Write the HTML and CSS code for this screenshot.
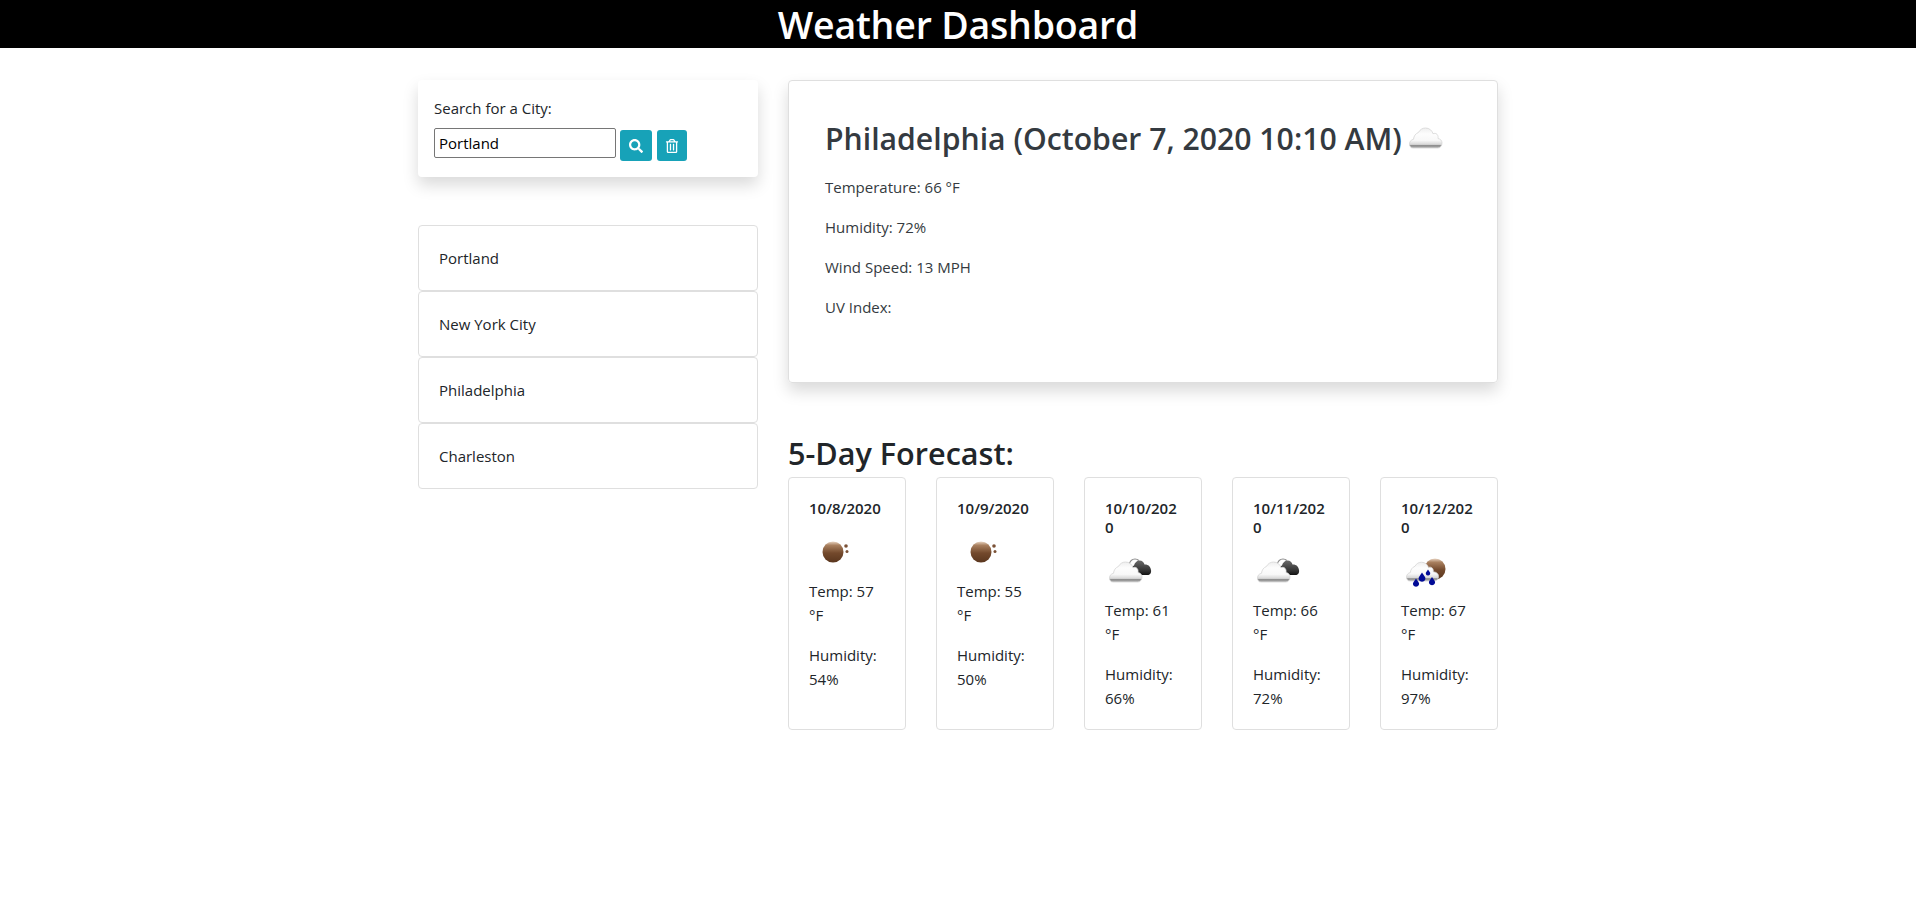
FILE: index.html

```html
<!DOCTYPE html>
<html lang="en">
<head>
  <meta charset="UTF-8">
  <title>Weather Dashboard</title>
  <link rel="stylesheet" href="styles.css">
</head>
<body>

  <svg class="defs" width="0" height="0">
    <defs>
      <linearGradient id="cloudFill" x1="0" y1="0" x2="0" y2="1">
        <stop offset="0" stop-color="#eeeeee"/>
        <stop offset="0.3" stop-color="#fdfdfd"/>
        <stop offset="0.62" stop-color="#f8f8f8"/>
        <stop offset="0.82" stop-color="#d8d8d8"/>
        <stop offset="0.88" stop-color="#8a8a8a"/>
        <stop offset="1" stop-color="#b5b5b5"/>
      </linearGradient>
      <linearGradient id="darkFill" x1="0" y1="0" x2="0" y2="1">
        <stop offset="0" stop-color="#6a6a6a"/>
        <stop offset="0.7" stop-color="#333333"/>
        <stop offset="1" stop-color="#111111"/>
      </linearGradient>
      <linearGradient id="moonFill" x1="0" y1="0" x2="0" y2="1">
        <stop offset="0" stop-color="#e9d5c3"/>
        <stop offset="0.18" stop-color="#a9805f"/>
        <stop offset="0.55" stop-color="#73492c"/>
        <stop offset="1" stop-color="#5a361e"/>
      </linearGradient>
      <symbol id="cloud" viewBox="0 0 50 50">
        <path fill="url(#cloudFill)" stroke="#d6d6d6" stroke-width="0.8" d="M8 38c-2.500 0-3.500-2-3.500-4 0-2.600 1.700-4.300 4-4.700.2-3.200 2.200-5.800 5-6.900 1.500-2.900 4.200-4.400 7-4.400 3.800 0 6.700 2.500 7.500 5.800 1.300-.8 3-.6 4 .5 1.200 1.300 1.200 2.900 1 4.200 2.500.5 4 2.200 4 4.300 0 2.800-1.600 5.200-4 5.200z"/>
      </symbol>
      <symbol id="moon" viewBox="0 0 50 50">
        <circle cx="24" cy="27" r="10.500" fill="url(#moonFill)"/>
        <circle cx="37" cy="21" r="1.800" fill="#7b5237"/>
        <circle cx="38" cy="26.500" r="1.500" fill="#7b5237"/>
      </symbol>
      <symbol id="clouds" viewBox="0 0 50 50">
        <path fill="none" stroke="#8d8d8d" stroke-width="1.200" d="M24 21c.8-3.500 3-6 6-6 1.500 0 2.800.5 3.800 1.500"/>
        <path fill="url(#darkFill)" d="M30 31c-3 0-4.500-2-4.500-4 0-2.500 1.500-5 3.500-5.500.7-3 3-5 5.500-5 2.700 0 4.500 1.800 5 4 3.500-.3 6 1.900 6.500 5.500.6 3-1.200 5-3.500 5z"/>
        <path fill="url(#cloudFill)" stroke="#d6d6d6" stroke-width="0.8" d="M8 38c-2.500 0-3.500-2-3.500-4 0-2.600 1.700-4.300 4-4.700.2-3.200 2.200-5.800 5-6.900 1.500-2.900 4.200-4.400 7-4.400 3.800 0 6.700 2.500 7.500 5.800 1.300-.8 3-.6 4 .5 1.200 1.300 1.200 2.900 1 4.200 2.500.5 4 2.200 4 4.300 0 2.800-1.600 5.200-4 5.200z"/>
      </symbol>
      <symbol id="rain" viewBox="0 0 50 50">
        <circle cx="34" cy="25" r="10.500" fill="url(#moonFill)"/>
        <path fill="url(#cloudFill)" stroke="#d6d6d6" stroke-width="0.8" d="M9 37c-2.500 0-3.500-2-3.500-4 0-2.400 1.700-4 3.800-4.400.3-3 2-5.300 4.700-6.400 1.500-2.700 3.800-4 6.500-4 3.500 0 6.200 2.300 7 5.400 1.300-.8 2.800-.5 3.800.5 1 1.200 1.100 2.500.9 3.700 3.300.2 5.300 2 5.300 4.500 0 2.800-1.600 4.700-4 4.700z"/>
        <path fill="#000a96" d="M15 34.500l2.700 4c1 1.800-.2 4.200-2.700 4.200s-3.700-2.400-2.700-4.200z"/>
        <path fill="#000a96" d="M21 28.500l3 4.600c1.100 2-.3 4.600-3 4.600s-4.100-2.600-3-4.600z"/>
        <path fill="#000a96" d="M27 25.500l2 3c.7 1.300-.2 3-2 3s-2.700-1.700-2-3z"/>
        <path fill="#000a96" d="M31 33l2.700 4c1 1.800-.2 4.200-2.700 4.200s-3.700-2.400-2.700-4.200z"/>
      </symbol>
    </defs>
  </svg>

  <header class="top-bar">
    <h1>Weather Dashboard</h1>
  </header>

  <div class="page">
    <aside class="sidebar">
      <form class="search-card">
        <label for="city">Search for a City:</label>
        <div class="search-row">
          <input type="text" id="city" value="Portland">
          <button type="button" class="btn btn-search" aria-label="Search">
            <svg viewBox="0 0 512 512" class="btn-icon"><path d="M505 442.700L405.300 343c-4.500-4.500-10.600-7-17-7H372c27.600-35.300 44-79.700 44-128C416 93.100 322.900 0 208 0S0 93.100 0 208s93.100 208 208 208c48.300 0 92.700-16.400 128-44v16.300c0 6.400 2.500 12.500 7 17l99.700 99.700c9.400 9.400 24.600 9.400 33.900 0l28.300-28.300c9.400-9.400 9.400-24.600.1-34zM208 336c-70.700 0-128-57.200-128-128 0-70.700 57.200-128 128-128 70.700 0 128 57.200 128 128 0 70.700-57.200 128-128 128z"/></svg>
          </button>
          <button type="button" class="btn btn-clear" aria-label="Clear">
            <svg viewBox="0 0 448 512" class="btn-icon"><path d="M268 416h24a12 12 0 0 0 12-12V188a12 12 0 0 0-12-12h-24a12 12 0 0 0-12 12v216a12 12 0 0 0 12 12zM432 80h-82.410l-34-56.700A48 48 0 0 0 274.410 0H173.590a48 48 0 0 0-41.160 23.300L98.410 80H16A16 16 0 0 0 0 96v16a16 16 0 0 0 16 16h16v336a48 48 0 0 0 48 48h288a48 48 0 0 0 48-48V128h16a16 16 0 0 0 16-16V96a16 16 0 0 0-16-16zM171.840 50.910A6 6 0 0 1 177 48h94a6 6 0 0 1 5.150 2.910L293.610 80H154.390zM368 464H80V128h288zm-212-48h24a12 12 0 0 0 12-12V188a12 12 0 0 0-12-12h-24a12 12 0 0 0-12 12v216a12 12 0 0 0 12 12z"/></svg>
          </button>
        </div>
      </form>

      <ul class="city-list">
        <li>Portland</li>
        <li>New York City</li>
        <li>Philadelphia</li>
        <li>Charleston</li>
      </ul>
    </aside>

    <main class="content">
      <section class="current">
        <h2>Philadelphia (October 7, 2020 10:10 AM) <svg class="current-icon"><use href="#cloud"/></svg></h2>
        <p>Temperature: 66 °F</p>
        <p>Humidity: 72%</p>
        <p>Wind Speed: 13 MPH</p>
        <p>UV Index:</p>
      </section>

      <h2 class="forecast-title">5-Day Forecast:</h2>
      <div class="forecast">
        <div class="day">
          <h6>10/8/2020</h6>
          <svg class="day-icon"><use href="#moon"/></svg>
          <p>Temp: 57 °F</p>
          <p>Humidity: 54%</p>
        </div>
        <div class="day">
          <h6>10/9/2020</h6>
          <svg class="day-icon"><use href="#moon"/></svg>
          <p>Temp: 55 °F</p>
          <p>Humidity: 50%</p>
        </div>
        <div class="day">
          <h6>10/10/2020</h6>
          <svg class="day-icon"><use href="#clouds"/></svg>
          <p>Temp: 61 °F</p>
          <p>Humidity: 66%</p>
        </div>
        <div class="day">
          <h6>10/11/2020</h6>
          <svg class="day-icon"><use href="#clouds"/></svg>
          <p>Temp: 66 °F</p>
          <p>Humidity: 72%</p>
        </div>
        <div class="day">
          <h6>10/12/2020</h6>
          <svg class="day-icon"><use href="#rain"/></svg>
          <p>Temp: 67 °F</p>
          <p>Humidity: 97%</p>
        </div>
      </div>
    </main>
  </div>

</body>
</html>
```

FILE: styles.css

```css
body {
  margin: 0;
  font-family: "Open Sans", "Noto Sans", sans-serif;
  font-size: 15px;
  line-height: 24px;
  color: #212529;
  background: #fff;
}
.defs { position: absolute; }

.top-bar { height: 48px; background: #000; text-align: center; }
.top-bar h1 { margin: 0; font-size: 37.5px; line-height: 50px; height: 48px; font-weight: 600; color: #fff; letter-spacing: -0.2px; }

.page { display: flex; gap: 30px; width: 1080px; margin: 32px auto 0; }
.sidebar { width: 340px; flex: none; }
.content { width: 710px; flex: none; }

.search-card {
  padding: 16px;
  height: 97px;
  box-sizing: border-box;
  border-radius: 4px;
  box-shadow: 0 8px 16px rgba(0,0,0,.15);
}
.search-card label { display: block; margin-bottom: 8px; }
.search-row { display: flex; align-items: flex-start; }
.search-row input {
  width: 182px;
  height: 30px;
  box-sizing: border-box;
  padding: 1px 4px;
  font: inherit;
  color: #000;
  border: 1px solid #767676;
  border-radius: 2px;
}
.btn {
  display: flex;
  align-items: center;
  justify-content: center;
  height: 31px;
  margin-top: 2px;
  padding: 0;
  background: #17a2b8;
  border: none;
  border-radius: 3px;
}
.btn-search { width: 32px; margin-left: 4px; }
.btn-clear { width: 30px; margin-left: 5px; }
.btn-icon { width: 14px; height: 14px; fill: #fff; }

.city-list { list-style: none; margin: 48px 0 0; padding: 0; }
.city-list li {
  height: 66px;
  box-sizing: border-box;
  padding: 20px;
  border: 1px solid #dfdfdf;
  border-radius: 4px;
}

.current {
  height: 303px;
  box-sizing: border-box;
  padding: 36px;
  color: #343a40;
  border: 1px solid #dfdfdf;
  border-radius: 4px;
  box-shadow: 0 8px 16px rgba(0,0,0,.15);
}
.current h2 { display: flex; align-items: flex-start; gap: 3px; height: 50px; margin: 0 0 8px; font-size: 30.2px; line-height: 44px; font-weight: 600; white-space: nowrap; }
.current p { margin: 0 0 16px; }
.current-icon { width: 50px; height: 50px; flex: none; margin-top: -7px; }

.forecast-title { margin: 50px 0 6px; font-size: 30.6px; line-height: 40px; font-weight: 600; }
.forecast { display: flex; gap: 30px; margin-top: -2px; }
.day {
  flex: 1;
  min-width: 0;
  box-sizing: border-box;
  padding: 21px 20px 19px;
  border: 1px solid #dfdfdf;
  border-radius: 4px;
}
.day h6 { margin: 0 0 7px; font-size: 15px; line-height: 19px; font-weight: 600; word-break: break-all; }
.day-icon { display: block; width: 50px; height: 50px; margin-bottom: 4px; }
.day p { margin: 0 0 16px; }
.day p:last-child { margin-bottom: 0; }
```
